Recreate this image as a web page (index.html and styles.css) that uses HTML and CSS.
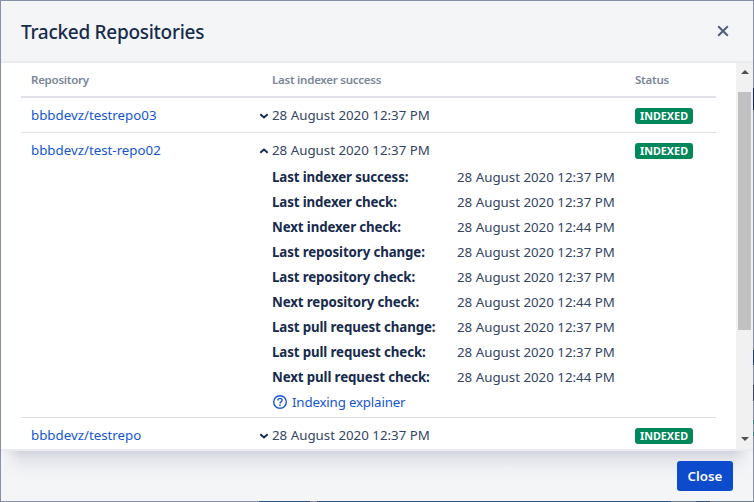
FILE: index.html
```html
<!DOCTYPE html>
<html lang="en">
<head>
<meta charset="utf-8">
<title>Tracked Repositories</title>
<link rel="stylesheet" href="styles.css">
</head>
<body>
<section class="dialog">
  <header class="dialog-header">
    <h1>Tracked Repositories</h1>
    <svg class="close-icon" width="12" height="12" viewBox="0 0 12 12"><path d="M1.2 1.2l9.6 9.6M10.8 1.2l-9.6 9.6"/></svg>
  </header>
  <div class="dialog-body">
    <div class="table">
      <div class="row head"><span>Repository</span><span>Last indexer success</span><span>Status</span></div>
      <div class="row">
        <a class="repo">bbbdevz/testrepo03</a>
        <div class="when"><svg class="chevron" width="10" height="6" viewBox="0 0 10 6"><path d="M1.3 1.2L5 4.4l3.7-3.2"/></svg><span class="date">28 August 2020 12:37 PM</span></div>
        <span class="badge">INDEXED</span>
      </div>
      <div class="row expanded">
        <a class="repo">bbbdevz/test-repo02</a>
        <div class="when"><svg class="chevron" width="10" height="6" viewBox="0 0 10 6"><path d="M1.3 4.8L5 1.6l3.7 3.2"/></svg><span class="date">28 August 2020 12:37 PM</span>
          <dl class="details">
            <dt>Last indexer success:</dt><dd>28 August 2020 12:37 PM</dd>
            <dt>Last indexer check:</dt><dd>28 August 2020 12:37 PM</dd>
            <dt>Next indexer check:</dt><dd>28 August 2020 12:44 PM</dd>
            <dt>Last repository change:</dt><dd>28 August 2020 12:37 PM</dd>
            <dt>Last repository check:</dt><dd>28 August 2020 12:37 PM</dd>
            <dt>Next repository check:</dt><dd>28 August 2020 12:44 PM</dd>
            <dt>Last pull request change:</dt><dd>28 August 2020 12:37 PM</dd>
            <dt>Last pull request check:</dt><dd>28 August 2020 12:37 PM</dd>
            <dt>Next pull request check:</dt><dd>28 August 2020 12:44 PM</dd>
          </dl>
          <a class="explainer"><svg width="16" height="16" viewBox="0 0 16 16"><circle cx="8" cy="8" r="6.3"/><path d="M5.9 6.5c0-1.3 .9-2.1 2.1-2.1s2.1.8 2.1 1.9c0 1.5-2.1 1.6-2.1 3.1M8 10.4v1.5"/></svg>Indexing explainer</a>
        </div>
        <span class="badge">INDEXED</span>
      </div>
      <div class="row last">
        <a class="repo">bbbdevz/testrepo</a>
        <div class="when"><svg class="chevron" width="10" height="6" viewBox="0 0 10 6"><path d="M1.3 1.2L5 4.4l3.7-3.2"/></svg><span class="date">28 August 2020 12:37 PM</span></div>
        <span class="badge">INDEXED</span>
      </div>
    </div>
    <div class="scrollbar">
      <svg class="up" width="8" height="4" viewBox="0 0 8 4"><path d="M0 4L4 0l4 4z"/></svg>
      <div class="thumb"></div>
      <svg class="down" width="8" height="4" viewBox="0 0 8 4"><path d="M0 0l4 4 4-4z"/></svg>
    </div>
  </div>
  <footer class="dialog-footer"><button>Close</button></footer>
</section>
</body>
</html>
```
FILE: styles.css
```css
* { box-sizing: border-box; }
body {
  margin: 0;
  width: 754px;
  height: 502px;
  overflow: hidden;
  font: 13.3px/20px "Noto Sans", "Open Sans", sans-serif;
  color: #172b4d;
}
/* The one-pixel padding exposes the dimmed page behind the dialog. */
.dialog {
  height: 502px;
  padding: 1px;
  background:
    linear-gradient(#14226b, #14226b) 753px 88px / 1px 22px no-repeat,
    linear-gradient(#1c3a8c, #1c3a8c) 753px 350px / 1px 15px no-repeat,
    linear-gradient(#3b4662, #3b4662) 753px 385px / 1px 16px no-repeat,
    linear-gradient(#2b7f7a, #2b7f7a) 753px 420px / 1px 4px no-repeat,
    linear-gradient(#2b7f7a, #2b7f7a) 753px 432px / 1px 4px no-repeat,
    linear-gradient(90deg, #8790a6 259px, #2b5583 259px 310px, #8790a6 310px 317px, #2b5583 317px 671px, #6f7f98 671px 696px, #2b5583 696px 710px, #6f7f98 710px) 0 501px / 754px 1px no-repeat,
    #8790a6;
  display: flex;
  flex-direction: column;
}
.dialog-header {
  height: 62px;
  flex: none;
  background: #f4f5f7;
  border-bottom: 2px solid #e9ebee;
  padding: 2px 24px 0 20px;
  display: flex;
  align-items: center;
  justify-content: space-between;
}
h1 { margin: 0; font-size: 19px; line-height: 24px; font-weight: 500; letter-spacing: -.28px; }
.close-icon { margin-bottom: 2px; fill: none; stroke: #505f79; stroke-width: 2; }
.dialog-body { height: 386px; flex: none; background: #fff; display: flex; overflow: hidden; }
.table { width: 695px; margin: 0 20px; flex: none; }
.row {
  display: grid;
  grid-template-columns: 251px 363px 81px;
  height: 35px;
  padding-top: 7px;
  border-bottom: 1px solid #dfe1e6;
  white-space: nowrap;
}
.row > :first-child { padding-left: 10px; }
.row > * { justify-self: start; }
.head {
  border-bottom-width: 2px;
  font-size: 11.5px;
  font-weight: 600;
  letter-spacing: -.25px;
  color: #7a869a;
}
.expanded { height: 285px; }
.last { border-bottom: 0; }
a { color: #1556cf; }
.when { position: relative; }
.chevron { position: absolute; left: -13px; top: 8px; fill: none; stroke: #172b4d; stroke-width: 2; }
.details { margin: 7px 0 0; display: grid; grid-template-columns: 185px auto; grid-auto-rows: 25px; }
dt { font-weight: 700; letter-spacing: -.12px; }
dd { margin: 0; }
.date, dd { color: #344563; }
.explainer { display: flex; align-items: center; gap: 4px; letter-spacing: -.17px; }
.explainer svg { fill: none; stroke: #1556cf; stroke-width: 1.4; }
.badge {
  width: 58px;
  height: 16px;
  margin-top: 3px;
  background: #00875a;
  border-radius: 3px;
  color: #fff;
  font-size: 10.8px;
  line-height: 16px;
  font-weight: 700;
  text-align: center;
}
.scrollbar {
  width: 17px;
  background: #f1f1f1;
  display: flex;
  flex-direction: column;
  align-items: center;
  padding: 7px 0 8px;
}
.scrollbar svg { fill: #505050; }
.thumb { width: 13px; height: 238px; margin: 18px 0 auto; background: #c1c1c1; }
.dialog-footer {
  flex: 1;
  border-top: 2px solid #e9ebee;
  background:
    linear-gradient(90deg, #f4f5f7, rgba(244,245,247,0) 20px calc(100% - 20px), #f4f5f7),
    linear-gradient(#d1d4db, #e3e5ea 8px, #eef0f3 18px, #f4f5f7 30px);
  padding: 10px 20px 0 0;
  display: flex;
  justify-content: flex-end;
  align-items: flex-start;
}
button {
  width: 56px;
  height: 30px;
  border: 0;
  padding: 0;
  border-radius: 3px;
  background: #0b4bcc;
  color: #fff;
  font: 600 13.3px/30px "Noto Sans", sans-serif;
}
```
